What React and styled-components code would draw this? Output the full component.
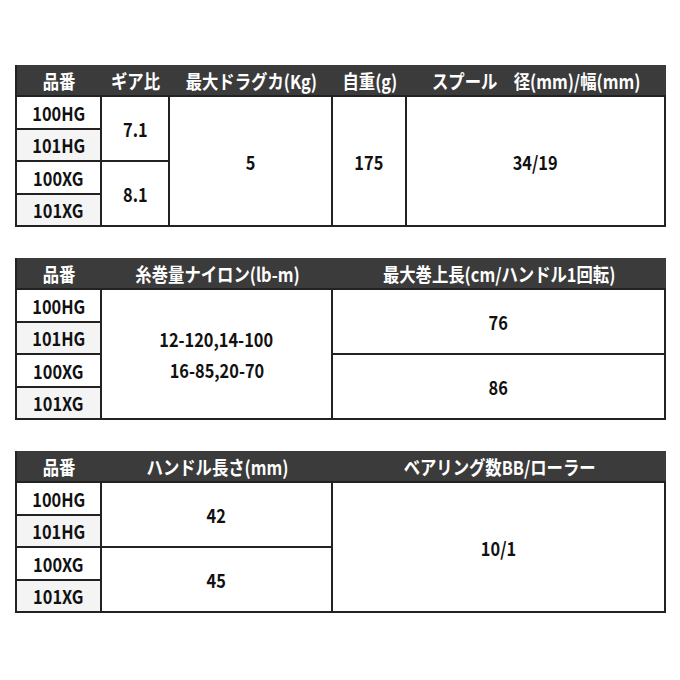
import React from 'react';
import styled, { createGlobalStyle } from 'styled-components';

const GlobalStyle = createGlobalStyle`
    body {
        margin: 0;
        background: #fff;
        font-family: 'Noto Sans CJK JP', 'Noto Sans', sans-serif;
        color: #111;
    }
`;

const Page = styled.div`
    display: flex;
    flex-direction: column;
    gap: 31px;
    padding: 65px 14px 0 15px;
`;

const Grid = styled.div`
    display: grid;
    grid-template-columns: ${(p) => p.$cols};
    grid-template-rows: 32px repeat(4, 32.5px);
    width: 651px;
    box-sizing: border-box;
    border-left: 2px solid #222;
`;

const HeadCell = styled.div`
    display: flex;
    align-items: center;
    justify-content: center;
    background: #3b3b3b;
    border-bottom: 2px solid #222;
    color: #fff;
    font-size: 19px;
    font-weight: 700;
    white-space: nowrap;
`;

const Cell = styled.div`
    grid-row: span ${(p) => p.$rows || 1};
    display: flex;
    flex-direction: column;
    align-items: center;
    justify-content: center;
    background: ${(p) => (p.$shade ? '#f4f4f4' : '#fff')};
    border-right: 2px solid #222;
    border-bottom: 2px solid #222;
    font-size: 19px;
    font-weight: 700;
    line-height: 31px;
    white-space: nowrap;
`;

const Label = styled.span`
    display: inline-block;
    transform: scaleX(0.86);
`;

const Table = ({ cols, head, cells }) => (
    <Grid $cols={cols}>
        {head.map((h) => (
            <HeadCell key={h}>
                <Label>{h}</Label>
            </HeadCell>
        ))}
        {cells.map(([text, rows, shade], i) => (
            <Cell key={i} $rows={rows} $shade={shade}>
                {text.split('\n').map((line) => (
                    <Label key={line}>{line}</Label>
                ))}
            </Cell>
        ))}
    </Grid>
);

const tables = [
    {
        cols: '85px 68px 163px 74px 259px',
        head: ['品番', 'ギア比', '最大ドラグカ(Kg)', '自重(g)', 'スプール\u3000径(mm)/幅(mm)'],
        cells: [
            ['100HG'], ['7.1', 2], ['5', 4], ['175', 4], ['34/19', 4],
            ['101HG', 1, true],
            ['100XG'], ['8.1', 2],
            ['101XG', 1, true],
        ],
    },
    {
        cols: '85px 231px 333px',
        head: ['品番', '糸巻量ナイロン(lb-m)', '最大巻上長(cm/ハンドル1回転)'],
        cells: [
            ['100HG'], ['12-120,14-100\n16-85,20-70', 4], ['76', 2],
            ['101HG', 1, true],
            ['100XG'], ['86', 2],
            ['101XG', 1, true],
        ],
    },
    {
        cols: '85px 231px 333px',
        head: ['品番', 'ハンドル長さ(mm)', 'ベアリング数BB/ローラー'],
        cells: [
            ['100HG'], ['42', 2], ['10/1', 4],
            ['101HG', 1, true],
            ['100XG'], ['45', 2],
            ['101XG', 1, true],
        ],
    },
];

export default function App() {
    return (
        <>
            <GlobalStyle />
            <Page>
                {tables.map((t, i) => (
                    <Table key={i} {...t} />
                ))}
            </Page>
        </>
    );
}
